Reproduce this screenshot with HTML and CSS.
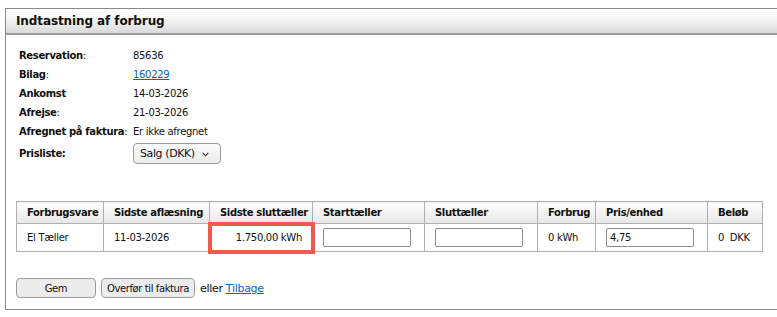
FILE: index.html
```html
<!DOCTYPE html>
<html>
<head>
<meta charset="utf-8">
<link rel="stylesheet" href="styles.css">
</head>
<body>
<div class="panel">
  <div class="panel-head">Indtastning af forbrug</div>
  <div class="panel-body">
    <div class="info">
      <div class="row"><span class="lbl">Reservation<span class="colon">:</span></span><span class="val">85636</span></div>
      <div class="row"><span class="lbl">Bilag<span class="colon">:</span></span><span class="val"><a href="#">160229</a></span></div>
      <div class="row"><span class="lbl">Ankomst</span><span class="val">14-03-2026</span></div>
      <div class="row"><span class="lbl">Afrejse<span class="colon">:</span></span><span class="val">21-03-2026</span></div>
      <div class="row"><span class="lbl">Afregnet på faktura<span class="colon">:</span></span><span class="val">Er ikke afregnet</span></div>
      <div class="row row-select"><span class="lbl">Prisliste:</span><span class="val"><span class="select-wrap"><select class="sel"><option>Salg (DKK)</option></select><svg class="chev" width="7" height="5" viewBox="0 0 7 5"><path d="M0.8 1 L3.5 3.8 L6.2 1" fill="none" stroke="#333" stroke-width="1.1"/></svg></span></span></div>
    </div>
    <table class="grid">
      <colgroup>
        <col class="w1"><col class="w2"><col class="w3"><col class="w4"><col class="w5"><col class="w6"><col class="w7"><col class="w8">
      </colgroup>
      <thead>
        <tr>
          <th>Forbrugsvare</th>
          <th>Sidste aflæsning</th>
          <th>Sidste sluttæller</th>
          <th>Starttæller</th>
          <th>Sluttæller</th>
          <th>Forbrug</th>
          <th>Pris/enhed</th>
          <th>Beløb</th>
        </tr>
      </thead>
      <tbody>
        <tr>
          <td>El Tæller</td>
          <td>11-03-2026</td>
          <td class="num hl">1.750,00 kWh</td>
          <td><input class="inp" type="text"></td>
          <td><input class="inp" type="text"></td>
          <td>0 kWh</td>
          <td><input class="inp" type="text" value="4,75"></td>
          <td>0&nbsp;&nbsp;DKK</td>
        </tr>
      </tbody>
    </table>
    <div class="actions">
      <button class="btn btn-gem">Gem</button>
      <button class="btn">Overfør til faktura</button>
      <span class="eller">eller <a href="#">Tilbage</a></span>
    </div>
  </div>
</div>
</body>
</html>
```
FILE: styles.css
```css
html, body {
  margin: 0;
  padding: 0;
  background: #fff;
  overflow: hidden;
}
body {
  font-family: "DejaVu Sans", Verdana, sans-serif;
  font-size: 10px;
  letter-spacing: -0.3px;
  color: #111;
  padding: 8px 0 0 5px;
}
.panel {
  border: 1px solid #8a8a8a;
  border-right: none;
  height: 302px;
  box-sizing: border-box;
}
.panel-head {
  height: 26px;
  box-sizing: border-box;
  border-bottom: 2px solid #9a9a9a;
  background: linear-gradient(#ffffff 0%, #f6f6f6 40%, #d9d9d9 100%);
  font-weight: bold;
  font-size: 12px;
  letter-spacing: -0.1px;
  line-height: 25px;
  padding-left: 10px;
  color: #111;
}
.panel-body {
  padding: 11px 0 0 10px;
}
.info {
  padding-left: 3px;
}
.row {
  display: flex;
  align-items: center;
  height: 19px;
}
.lbl {
  font-weight: bold;
  letter-spacing: -0.35px;
  width: 114px;
  flex: none;
  white-space: nowrap;
}
.colon { font-weight: normal; }
.val { flex: none; white-space: nowrap; }
a { color: #0a5fc2; }
.row-select {
  height: 24px;
  margin-top: 0;
}
.select-wrap {
  position: relative;
  display: inline-block;
}
.sel {
  appearance: none;
  -webkit-appearance: none;
  width: 88px;
  height: 21px;
  border: 1px solid #9a9a9a;
  border-radius: 4px;
  background: linear-gradient(#fafafa, #ececec);
  font-family: "DejaVu Sans", Verdana, sans-serif;
  font-size: 11px;
  letter-spacing: -0.4px;
  color: #111;
  padding: 0 0 0 6px;
  margin: 0;
  display: block;
}
.chev {
  position: absolute;
  right: 12px;
  top: 9px;
}
.grid {
  margin-top: 36px;
  border-collapse: collapse;
  table-layout: fixed;
  width: 746px;
}
.w1 { width: 87px; }
.w2 { width: 106px; }
.w3 { width: 103px; }
.w4 { width: 112px; }
.w5 { width: 113px; }
.w6 { width: 58px; }
.w7 { width: 112px; }
.w8 { width: 55px; }
.grid th, .grid td {
  border: 1px solid #b0b0b0;
  text-align: left;
  padding: 0 0 0 10px;
  white-space: nowrap;
  line-height: 14px;
  vertical-align: middle;
}
.grid th {
  height: 21px;
  font-weight: bold;
  letter-spacing: -0.35px;
  background: linear-gradient(#ffffff, #e6e6e6);
}
.grid td {
  height: 27px;
}
.grid td.num {
  text-align: right;
  padding: 0 10px 0 0;
}
.grid td.hl {
  outline: 4px solid #f25a4f;
  outline-offset: -2px;
}
.inp {
  width: 88px;
  height: 19px;
  box-sizing: border-box;
  border: 1px solid #8c8c8c;
  border-radius: 2px;
  font-family: "DejaVu Sans", Verdana, sans-serif;
  font-size: 10px;
  letter-spacing: -0.3px;
  padding: 0 3px;
  margin: 0;
  display: block;
  color: #111;
}
.actions {
  margin-top: 26px;
  display: flex;
  align-items: center;
  gap: 5px;
}
.btn {
  height: 20px;
  border: 1px solid #9a9a9a;
  border-radius: 4px;
  background: #ececec;
  font-family: "DejaVu Sans", Verdana, sans-serif;
  font-size: 10px;
  letter-spacing: -0.4px;
  color: #111;
  padding: 0 5px;
  margin: 0;
}
.btn-gem { width: 80px; }
.eller { font-size: 11px; letter-spacing: -0.3px; }
```
